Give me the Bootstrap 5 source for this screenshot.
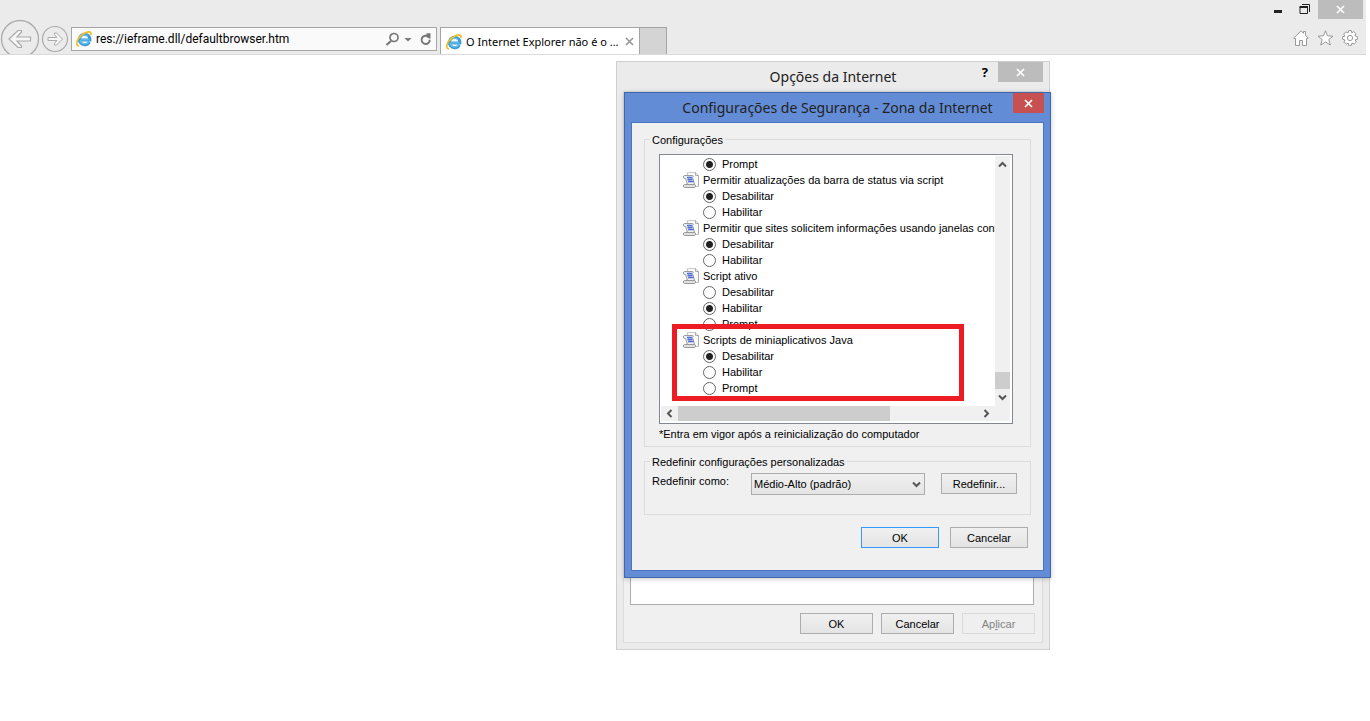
<!DOCTYPE html>
<html lang="pt-BR">
<head>
<meta charset="utf-8">
<meta name="viewport" content="width=device-width, initial-scale=1">
<title>O Internet Explorer não é o navegador padrão</title>
<link href="https://cdn.jsdelivr.net/npm/bootstrap@5.3.0/dist/css/bootstrap.min.css" rel="stylesheet">
<style>
body{font-family:"Liberation Sans",Arial,sans-serif;font-size:11px;line-height:16px;color:#000;background:#fff;min-height:100vh}
button,input,select{font:inherit;color:inherit}
button{padding:0}
svg{display:block;flex:none}
.chrome{background:#ebebeb;border-bottom:1px solid #dadada;height:55px;overflow:hidden}
.caption-bar{height:20px;padding-right:3px}
.caption-btn{width:27px;height:19px;border:0;background:none;display:flex;justify-content:center}
.caption-close{width:45px;height:20px;background:#bcbcbc;border:0;display:flex;align-items:center;justify-content:center}
.caption-bar .caption-close{height:19px}
.round-btn{border:0;background:none}
.addr{width:366px;height:24px;margin:7px 3px 0 3px;border:1px solid #a5a5a5;background:#fafafa;padding:0 4px}
.addr input{border:0;background:none;outline:0;padding:0;min-width:0;height:20px}
.addr input{font-family:Roboto,sans-serif;font-size:12px}
.tab-item{font-family:"Noto Sans",sans-serif;font-size:11px}
.tab-item{width:200px;height:28px;margin-top:7px;border:1px solid #a5a5a5;border-bottom:0;background:#fff;padding:0 5px}
.new-tab{width:27px;height:28px;margin-top:7px;border:1px solid #a5a5a5;border-left:0;border-bottom:0;background:#d4d4d4}
.plain{border:0;background:none}
.win{position:absolute}
.win-options{left:616px;top:61px;width:434px;background:#ebebeb;border:1px solid #cfcfcf;padding:0 6px 6px}
.win-security{left:624px;top:92px;width:427px;background:#628cd5;border:1px solid #4066ad;padding:0 6px 6px;box-shadow:0 1px 5px rgba(0,0,0,.22)}
.win-title{height:29px;position:relative}
.win-title h1{font-family:"Noto Sans",sans-serif;font-size:14px;line-height:29px;margin:0;font-weight:400;color:#222;text-align:center;white-space:nowrap}
.win-ctl{position:absolute;top:0;right:0}
.help-btn{font-family:"Noto Sans",sans-serif;font-size:13px;line-height:20px;font-weight:700;margin-right:10px}
.close-red{width:31px;background:#c75050}
.options-body{background:#f0f0f0;border:1px solid #dcdcdc;height:552px;padding:0 7px 8px 6px}
.panel-box{background:#fff;border:1px solid #adadad;height:60px;margin-right:1px}
.btn-row{gap:8px}
.security-body{background:#f0f0f0;border:1px solid #4a74bd;padding:16px 12px 22px}
.group{border:1px solid #dcdcdc;position:relative;padding:0 7px}
.group-main{height:308px}
.group-reset{height:54px;margin-top:14px;padding-top:11px}
.reset-row{padding-right:6px}
.select-box{margin-right:16px}
.confirm-row{gap:11px;margin:12px 3px 0 0}
.group-label{position:absolute;top:-8px;left:5px;background:#f0f0f0;padding:0 2px;font-size:11px;line-height:16px;margin:0;float:none;width:auto;white-space:nowrap}
.btn-win{border:1px solid #adadad;background:linear-gradient(#f0f0f0,#e4e4e4);height:21px;line-height:20px;width:73px;text-align:center}
.btn-reset{width:76px}
.btn-wide{width:78px}
.btn-default{border-color:#3399ff}
.btn-win:disabled{color:#838383;border-color:#d9d9d9;background:#efefef}
.listbox{border:1px solid #828790;background:#fff;padding:1px 2px 2px 1px;height:270px;margin:14px 10px 0 7px;display:grid;grid-template-columns:minmax(0,1fr) 15px;grid-template-rows:minmax(0,1fr) 15px}
.note{margin:2px 0 0 7px}
.tree{position:relative;overflow:hidden}
.tree-row{display:flex;align-items:center;height:16px;white-space:nowrap}
.tree-head{padding-left:22px;gap:4px}
.tree-opt{padding-left:42px;gap:6px}
.tree input{appearance:none;width:13px;height:13px;margin:0;border:1px solid #666;border-radius:50%;background:#fff;flex:none}
.tree input:checked{background:radial-gradient(circle,#222 0 3px,#fff 4px)}
.vbar,.hbar,.bar-corner{background:#f0f0f0}
.vbar .arrow{height:17px}
.hbar .arrow{width:17px}
.arrow{display:flex;align-items:center;justify-content:center;border:0;background:none}
.arrow-up{transform:rotate(180deg)}
.arrow-left{transform:rotate(90deg)}
.arrow-right{transform:rotate(-90deg)}
.thumb{background:#cdcdcd}
.vbar .thumb{height:17px}
.hbar .thumb{width:212px}
.highlight{position:absolute;left:47px;top:231px;width:292px;height:77px;border:5px solid #ed1c24;pointer-events:none}
.select-box{position:relative}
.select-box select{display:block;appearance:none;width:174px;height:22px;border:1px solid #adadad;border-radius:0;background:linear-gradient(#f0f0f0,#e4e4e4);padding:0 2px}
.select-box svg{position:absolute;right:4px;top:8px;pointer-events:none}
</style>
</head>
<body>
<svg width="0" height="0" class="position-absolute" aria-hidden="true">
<defs>
<symbol id="ie" viewBox="0 0 16 16"><path d="M13.300 11A5.300 5.300 0 1 1 13.900 9H5" fill="none" stroke="#3a9ad8" stroke-width="3"/><path d="M12.800 10.800A4.900 4.900 0 0 1 4 9M13.600 8.800H5M4 7A5 5 0 0 1 12 5.500" fill="none" stroke="#62c2f0" stroke-width="1.300"/><path d="M3 14.800C-1.500 15 1 6.500 8 2.500C12 .2 15.800 0 14.800 4" fill="none" stroke="#f5bd1f" stroke-width="1.700"/></symbol>
<symbol id="scroll" viewBox="0 0 16 16"><path d="M4.500 .5H12.500L15.500 3.500V14.500H4.500Z" fill="#fafafa" stroke="#c8c8c8"/><path d="M12.500 .5V3.500H15.500V14.500" fill="none" stroke="#aaa"/><path d="M1.500 3.500H9.500C10.500 3.500 10.500 5 9.500 5.500L11.500 12.500H4.500L2.500 6.500H1.500C0 6.500 0 3.500 1.500 3.500Z" fill="#eee" stroke="#999"/><path d="M1.500 12.500H11.500C13 12.500 13 15.500 11.500 15.500H1.500C0 15.500 0 12.500 1.500 12.500Z" fill="#e0e0e0" stroke="#999"/><path d="M4 5.500H9M4.500 7.500H9.500M5 9.500H10.500" stroke="#4a6ce0" stroke-width="1.400"/></symbol>
<symbol id="x" viewBox="0 0 9 9"><path d="M1 1 8 8M8 1 1 8" fill="none" stroke="currentColor" stroke-width="1.700"/></symbol>
<symbol id="chev" viewBox="0 0 9 7"><path d="M1 1.500 4.500 5 8 1.500" fill="none" stroke="#555" stroke-width="2"/></symbol>
</defs>
</svg>

<header class="chrome me-1">
  <div class="caption-bar d-flex justify-content-end">
    <button class="caption-btn" aria-label="Minimizar"><svg width="8" height="19"><path d="M0 11.500H8" stroke="#222" stroke-width="3"/></svg></button>
    <button class="caption-btn" aria-label="Restaurar"><svg width="12" height="19"><path d="M3 4.500H10.500V12M1 7.500H8.500V13.500H1Z" fill="none" stroke="#222"/><path d="M.5 7H9" stroke="#222" stroke-width="2"/></svg></button>
    <button class="caption-close text-white" aria-label="Fechar"><svg width="9" height="9"><use href="#x"/></svg></button>
  </div>
  <div class="d-flex align-items-start">
    <button class="round-btn" aria-label="Voltar"><svg width="40" height="38"><circle cx="20" cy="19" r="18.500" fill="none" stroke="#aaa" stroke-width="1.300"/><path d="M9 19 18 10.500 21.500 10.500V12L17 17H30.500V21H17L21.500 26V27.500H18Z" fill="#f6f6f6" stroke="#aaa" stroke-width="1.200"/></svg></button>
    <button class="round-btn" aria-label="Avançar"><svg width="28" height="38"><circle cx="15" cy="19" r="12.500" fill="none" stroke="#aaa" stroke-width="1.200"/><path d="M22.500 19 16.500 13H14.500V14.500L17 17.500H8V20.500H17L14.500 23.500V25H16.500Z" fill="#f6f6f6" stroke="#aaa"/></svg></button>
    <div class="addr d-flex align-items-center">
      <svg width="16" height="16"><use href="#ie"/></svg>
      <input class="flex-grow-1 ms-1" type="text" value="res://ieframe.dll/defaultbrowser.htm" aria-label="Endereço">
      <button class="plain" aria-label="Pesquisar"><svg width="15" height="16"><circle cx="9" cy="6.500" r="4" fill="none" stroke="#777" stroke-width="1.700"/><path d="M6 10 1.500 14" stroke="#777" stroke-width="2.200"/></svg></button>
      <button class="plain ms-1" aria-label="Histórico"><svg width="8" height="16"><path d="M.5 7H7.500L4 10.500Z" fill="#777"/></svg></button>
      <button class="plain ms-2" aria-label="Atualizar"><svg width="12" height="16"><path d="M9.800 8.800A4.100 4.100 0 1 1 6 4.800H7.500" fill="none" stroke="#777" stroke-width="1.900"/><path d="M6.500 2.200H10.500V7.500H9L6.500 6Z" fill="#777"/></svg></button>
    </div>
    <div class="tab-item d-flex align-items-center">
      <svg width="16" height="16"><use href="#ie"/></svg>
      <span class="ms-1 flex-grow-1 text-nowrap">O Internet Explorer não é o ...</span>
      <button class="plain" aria-label="Fechar guia"><svg width="9" height="9" color="#999"><use href="#x"/></svg></button>
    </div>
    <button class="new-tab" aria-label="Nova guia"></button>
    <div class="d-flex gap-2 ms-auto mt-2 pe-2">
      <button class="plain" aria-label="Início"><svg width="16" height="20" viewBox="0 -2 16 20" fill="#fff" stroke="#999"><path d="M2.500 8.500V15.500H6.500V10.500H9.500V15.500H13.500V8.500L15.300 8.200 12.500 5.300V1.500H10.500V3.300L8 .8.7 8.200Z"/></svg></button>
      <button class="plain" aria-label="Favoritos"><svg width="17" height="20" viewBox="0 -2 17 20" fill="#fff" stroke="#999"><path d="M8.500 .8 10.500 5.800 16 6.200 11.800 9.500 13.300 15 8.500 12 3.700 15 5.200 9.500 1 6.200 6.500 5.800Z"/></svg></button>
      <button class="plain" aria-label="Ferramentas"><svg width="16" height="20" viewBox="0 -2 16 20" fill="#fff" stroke="#999"><path d="M6.700.6H9.300L9.800 2.800 11.700 1.600 13.900 3.600 12.900 5.800 15.400 6.700V9.300L13.200 9.800 14.300 12 12.200 14 10 13.100 9.300 15.400H6.700L6.200 13.200 4 14.200 2 12.200 2.900 9.900.6 9.300V6.700L2.800 6.200 1.700 4 3.800 1.900 6 2.900Z"/><circle cx="8" cy="8" r="2.600"/></svg></button>
    </div>
  </div>
</header>

<section class="win win-options" aria-label="Opções da Internet">
  <div class="win-title"><h1>Opções da Internet</h1>
    <div class="win-ctl d-flex">
      <button class="plain help-btn" aria-label="Ajuda">?</button>
      <button class="caption-close text-white" aria-label="Fechar"><svg width="9" height="9"><use href="#x"/></svg></button>
    </div>
  </div>
  <div class="options-body d-flex flex-column justify-content-end">
    <div class="panel-box mb-2"></div>
    <div class="d-flex justify-content-end btn-row">
      <button class="btn-win">OK</button><button class="btn-win">Cancelar</button><button class="btn-win" disabled>Ap<u>l</u>icar</button>
    </div>
  </div>
</section>

<section class="win win-security" aria-label="Configurações de Segurança">
  <div class="win-title"><h1>Configurações de Segurança - Zona da Internet</h1>
    <button class="win-ctl caption-close close-red text-white" aria-label="Fechar"><svg width="9" height="9"><use href="#x"/></svg></button>
  </div>
  <div class="security-body">
    <fieldset class="group group-main">
      <legend class="group-label">Configurações</legend>
      <div class="listbox">
        <div class="tree">
          <label class="tree-row tree-opt"><input type="radio" name="g0" checked>Prompt</label>
          <div class="tree-row tree-head"><svg width="16" height="16"><use href="#scroll"/></svg>Permitir atualizações da barra de status via script</div>
          <label class="tree-row tree-opt"><input type="radio" name="g1" checked>Desabilitar</label>
          <label class="tree-row tree-opt"><input type="radio" name="g1">Habilitar</label>
          <div class="tree-row tree-head"><svg width="16" height="16"><use href="#scroll"/></svg>Permitir que sites solicitem informações usando janelas contro</div>
          <label class="tree-row tree-opt"><input type="radio" name="g2" checked>Desabilitar</label>
          <label class="tree-row tree-opt"><input type="radio" name="g2">Habilitar</label>
          <div class="tree-row tree-head"><svg width="16" height="16"><use href="#scroll"/></svg>Script ativo</div>
          <label class="tree-row tree-opt"><input type="radio" name="g3">Desabilitar</label>
          <label class="tree-row tree-opt"><input type="radio" name="g3" checked>Habilitar</label>
          <label class="tree-row tree-opt"><input type="radio" name="g3">Prompt</label>
          <div class="tree-row tree-head"><svg width="16" height="16"><use href="#scroll"/></svg>Scripts de miniaplicativos Java</div>
          <label class="tree-row tree-opt"><input type="radio" name="g4" checked>Desabilitar</label>
          <label class="tree-row tree-opt"><input type="radio" name="g4">Habilitar</label>
          <label class="tree-row tree-opt"><input type="radio" name="g4">Prompt</label>
        </div>
        <div class="vbar d-flex flex-column">
          <button class="arrow mb-auto" aria-label="Para cima"><svg width="9" height="7" class="arrow-up"><use href="#chev"/></svg></button>
          <div class="thumb"></div>
          <button class="arrow" aria-label="Para baixo"><svg width="9" height="7"><use href="#chev"/></svg></button>
        </div>
        <div class="hbar d-flex">
          <button class="arrow" aria-label="Para a esquerda"><svg width="9" height="7" class="arrow-left"><use href="#chev"/></svg></button>
          <div class="thumb"></div>
          <button class="arrow ms-auto" aria-label="Para a direita"><svg width="9" height="7" class="arrow-right"><use href="#chev"/></svg></button>
        </div>
        <div class="bar-corner"></div>
      </div>
      <p class="note">*Entra em vigor após a reinicialização do computador</p>
    </fieldset>
    <fieldset class="group group-reset">
      <legend class="group-label">Redefinir configurações personalizadas</legend>
      <div class="d-flex align-items-start reset-row">
        <label for="level" class="me-auto">Redefinir como:</label>
        <div class="select-box"><select id="level"><option>Médio-Alto (padrão)</option></select><svg width="9" height="7"><use href="#chev"/></svg></div>
        <button class="btn-win btn-reset">Redefinir...</button>
      </div>
    </fieldset>
    <div class="d-flex justify-content-end confirm-row">
      <button class="btn-win btn-wide btn-default">OK</button><button class="btn-win btn-wide">Cancelar</button>
    </div>
  </div>
  <div class="highlight"></div>
</section>
<script src="https://cdn.jsdelivr.net/npm/bootstrap@5.3.0/dist/js/bootstrap.bundle.min.js"></script>
</body>
</html>
